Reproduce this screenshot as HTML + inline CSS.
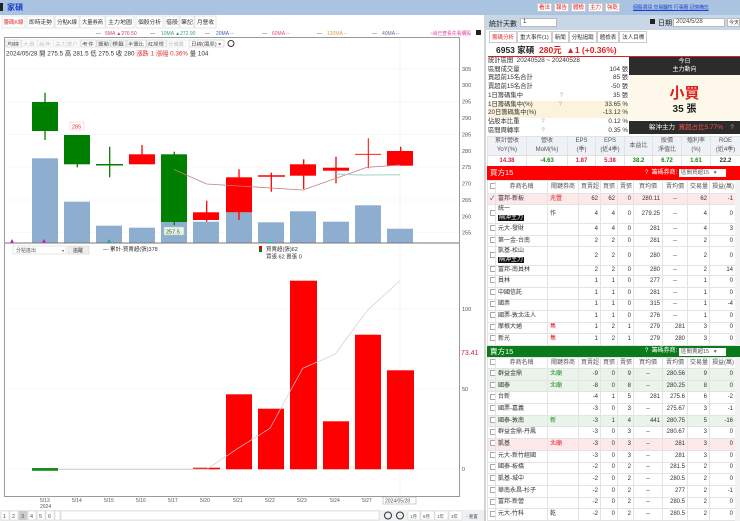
<!DOCTYPE html>
<html><head><meta charset="utf-8">
<style>
*{margin:0;padding:0;box-sizing:border-box}
body{width:740px;height:521px;overflow:hidden;background:#fff;font-family:"Liberation Sans","Noto Sans CJK TC",sans-serif;font-size:7px;color:#333;position:relative}
.a{position:absolute;white-space:nowrap}
table{border-collapse:collapse;table-layout:fixed;position:absolute}
td{border:1px solid #e3e3e3;font-size:6px;padding:0 2px;text-align:right;overflow:hidden;white-space:nowrap;line-height:9px}
td.l{text-align:left}
td.c{text-align:center}
.cb{display:inline-block;width:6px;height:6px;border:1px solid #aaa;background:#fff;vertical-align:middle}
.tag{background:#111;color:#fff;padding:0 1px;font-size:6px}
.btn{position:absolute;top:3px;width:15px;height:9px;background:#fff;color:#d22;border:1px solid #ccc;font-size:5.5px;line-height:8px;text-align:center}
</style></head><body>
<svg class="a" style="left:0;top:0" width="486" height="521" font-family="Liberation Sans,Noto Sans CJK TC,sans-serif">
<rect x="0" y="0" width="486" height="15" fill="#a9c3e0"/>
<rect x="0" y="3" width="3" height="8" fill="#222"/>
<text x="7" y="10" font-size="8" fill="#1a3fcf" font-weight="bold">家碩</text>
<g font-size="5.5" fill="#333">
<rect x="2" y="16" width="23" height="12" fill="#fff" stroke="#ccc" stroke-width=".5"/><text x="3.5" y="24" fill="#e03030" textLength="20" lengthAdjust="spacingAndGlyphs">籌碼K線</text>
<rect x="27" y="16" width="27" height="12" fill="#fff" stroke="#ccc" stroke-width=".5"/><text x="29" y="24" textLength="23" lengthAdjust="spacingAndGlyphs">即時走勢</text>
<rect x="55" y="16" width="24" height="12" fill="#fff" stroke="#ccc" stroke-width=".5"/><text x="57" y="24" textLength="20" lengthAdjust="spacingAndGlyphs">分點K線</text>
<rect x="80" y="16" width="25" height="12" fill="#fff" stroke="#ccc" stroke-width=".5"/><text x="82" y="24" textLength="21" lengthAdjust="spacingAndGlyphs">大量券商</text>
<rect x="106" y="16" width="28" height="12" fill="#fff" stroke="#ccc" stroke-width=".5"/><text x="108" y="24" textLength="24" lengthAdjust="spacingAndGlyphs">主力地圖</text>
<rect x="136" y="16" width="27" height="12" fill="#fff" stroke="#ccc" stroke-width=".5"/><text x="138" y="24" textLength="23" lengthAdjust="spacingAndGlyphs">個股分析</text>
<rect x="165" y="16" width="14" height="12" fill="#fff" stroke="#ccc" stroke-width=".5"/><text x="166" y="24" textLength="12" lengthAdjust="spacingAndGlyphs">借股</text>
<rect x="180" y="16" width="14" height="12" fill="#fff" stroke="#ccc" stroke-width=".5"/><text x="181" y="24" textLength="12" lengthAdjust="spacingAndGlyphs">筆記</text>
<rect x="195" y="16" width="21" height="12" fill="#fff" stroke="#ccc" stroke-width=".5"/><text x="197" y="24" textLength="17" lengthAdjust="spacingAndGlyphs">月營收</text>
</g>
<g font-size="5">
<text x="96" y="35" fill="#555">—</text><text x="105" y="35" fill="#d0406a">5MA ▲276.50</text>
<text x="150" y="35" fill="#555">—</text><text x="161" y="35" fill="#3aa08a">10MA ▲272.90</text>
<text x="205" y="35" fill="#555">—</text><text x="216" y="35" fill="#4060c0">20MA --</text>
<text x="262" y="35" fill="#555">—</text><text x="272" y="35" fill="#e05070">60MA --</text>
<text x="317" y="35" fill="#555">—</text><text x="327" y="35" fill="#e0a040">120MA --</text>
<text x="372" y="35" fill="#555">—</text><text x="382" y="35" fill="#8060a0">40MA --</text>
<text x="430" y="35" fill="#e040a0" textLength="41" lengthAdjust="spacingAndGlyphs">○尚已查看先看購股</text>
</g>
<rect x="476" y="30" width="5" height="5" fill="#222"/>
<rect x="4.5" y="37.5" width="455" height="459" fill="#fff" stroke="#999"/>
<g font-size="4.5" fill="#444">
<rect x="6" y="40" width="15" height="7" fill="#fff" stroke="#bbb" stroke-width=".5"/><text x="7" y="45.5" textLength="12" lengthAdjust="spacingAndGlyphs">均線</text>
<rect x="22" y="40" width="15" height="7" fill="#fff" stroke="#ddd" stroke-width=".5"/><text x="23" y="45.5" fill="#bbb" textLength="12" lengthAdjust="spacingAndGlyphs">大買</text>
<rect x="38" y="40" width="15" height="7" fill="#fff" stroke="#ddd" stroke-width=".5"/><text x="39" y="45.5" fill="#bbb" textLength="12" lengthAdjust="spacingAndGlyphs">延伸</text>
<rect x="54" y="40" width="15" height="7" fill="#fff" stroke="#ddd" stroke-width=".5"/><text x="55" y="45.5" fill="#bbb" textLength="12" lengthAdjust="spacingAndGlyphs">主力</text>
<rect x="66" y="40" width="14" height="7" fill="#fff" stroke="#ddd" stroke-width=".5"/><text x="67" y="45.5" fill="#bbb" textLength="11" lengthAdjust="spacingAndGlyphs">散戶</text>
<rect x="81" y="40" width="15" height="7" fill="#fff" stroke="#bbb" stroke-width=".5"/><text x="82" y="45.5" textLength="12" lengthAdjust="spacingAndGlyphs">考件</text>
<rect x="97" y="40" width="13" height="7" fill="#fff" stroke="#bbb" stroke-width=".5"/><text x="98" y="45.5" textLength="11" lengthAdjust="spacingAndGlyphs">籌動</text>
<rect x="111" y="40" width="15" height="7" fill="#fff" stroke="#bbb" stroke-width=".5"/><text x="112" y="45.5" textLength="12" lengthAdjust="spacingAndGlyphs">標籤</text>
<rect x="127" y="40" width="19" height="7" fill="#fff" stroke="#bbb" stroke-width=".5"/><text x="128" y="45.5" textLength="16" lengthAdjust="spacingAndGlyphs">半籌比</text>
<rect x="147" y="40" width="19" height="7" fill="#fff" stroke="#bbb" stroke-width=".5"/><text x="148" y="45.5" textLength="16" lengthAdjust="spacingAndGlyphs">紅綠燈</text>
<rect x="167" y="40" width="19" height="7" fill="#fff" stroke="#ddd" stroke-width=".5"/><text x="168" y="45.5" fill="#bbb" textLength="16" lengthAdjust="spacingAndGlyphs">分價籌</text>
<rect x="189" y="40" width="35" height="7" fill="#fff" stroke="#bbb" stroke-width=".5"/><text x="191" y="45.5" textLength="30" lengthAdjust="spacingAndGlyphs">日線(還原)  ▾</text>
<circle cx="231" cy="43.5" r="3" fill="none" stroke="#333" stroke-width="1"/>
</g>
<text x="6" y="55.5" font-size="6.3" fill="#333">2024/05/28 開 275.5 高 281.5 低 275.5 收 280 <tspan fill="#e03030">  漲跌 1  漲幅 0.36%</tspan>  量 104</text>
<g stroke="#f1f1f1" stroke-width=".5">
<line x1="5" y1="69" x2="459" y2="69"/><line x1="5" y1="101.7" x2="459" y2="101.7"/><line x1="5" y1="134.5" x2="459" y2="134.5"/><line x1="5" y1="167" x2="459" y2="167"/><line x1="5" y1="200" x2="459" y2="200"/><line x1="5" y1="232.7" x2="459" y2="232.7"/>
<line x1="5" y1="309" x2="459" y2="309"/><line x1="5" y1="389" x2="459" y2="389"/><line x1="5" y1="469" x2="459" y2="469"/>
</g>
<line x1="400" y1="38" x2="400" y2="496" stroke="#e8e8e8" stroke-width=".6"/>
<g fill="#8eaed0">
<rect x="32" y="158.3" width="26" height="84.4"/><rect x="64" y="201.7" width="26" height="41"/><rect x="96" y="225.7" width="26" height="17"/><rect x="129" y="227.7" width="26" height="15"/><rect x="161" y="221.7" width="26" height="21"/><rect x="193" y="221.7" width="26" height="21"/><rect x="226" y="212.3" width="26" height="30.4"/><rect x="258" y="222.3" width="26" height="20.4"/><rect x="290" y="211.3" width="26" height="31.4"/><rect x="323" y="221.7" width="26" height="21"/><rect x="355" y="205.3" width="26" height="37.4"/><rect x="387" y="228.7" width="26" height="14"/>
</g>
<g fill="#008000" stroke="#008000">
<line x1="45" y1="92.7" x2="45" y2="140" stroke-width="1.3"/><rect x="32" y="102" width="26" height="29" stroke="none"/>
<line x1="77.3" y1="135" x2="77.3" y2="167.3" stroke-width="1.3"/><rect x="64" y="135" width="26" height="29.3" stroke="none"/>
<line x1="109.7" y1="146.7" x2="109.7" y2="177.3" stroke-width="1.3"/><line x1="96" y1="164.7" x2="123" y2="164.7" stroke-width="1.5"/>
<line x1="174.3" y1="151.7" x2="174.3" y2="225" stroke-width="1.3"/><rect x="161" y="154.3" width="26" height="67.7" stroke="none"/>
</g>
<g fill="#ff0000" stroke="#ff0000">
<line x1="142" y1="145" x2="142" y2="160" stroke-width="1.3"/><rect x="129" y="154.3" width="26" height="10" stroke="none"/>
<line x1="206.7" y1="200.7" x2="206.7" y2="221.7" stroke-width="1.3"/><rect x="193" y="212.3" width="26" height="7.7" stroke="none"/>
<line x1="239" y1="169.3" x2="239" y2="220" stroke-width="1.3"/><rect x="226" y="177.3" width="26" height="35" stroke="none"/>
<line x1="271.3" y1="172.7" x2="271.3" y2="191.7" stroke-width="1.3"/><line x1="258" y1="176" x2="285" y2="176" stroke-width="1.5"/>
<line x1="303.7" y1="159.3" x2="303.7" y2="189" stroke-width="1.3"/><rect x="290" y="164.3" width="26" height="11.4" stroke="none"/>
<line x1="336" y1="156.7" x2="336" y2="183.3" stroke-width="1.3"/><rect x="323" y="167.7" width="26" height="3" stroke="none"/>
<line x1="368.3" y1="138.3" x2="368.3" y2="168.3" stroke-width="1"/><line x1="355" y1="154.3" x2="381" y2="154.3" stroke-width=".8"/>
<line x1="400.7" y1="146.7" x2="400.7" y2="152" stroke-width="1.3"/><rect x="387" y="151" width="26" height="14.7" stroke="none"/>
</g>
<polyline points="174,169.5 206.7,184 303,190 334,179 367,167.3 400,165" fill="none" stroke="#c08080" stroke-width=".8"/>
<polyline points="336,174 360,175 400,174.7" fill="none" stroke="#9fd0c8" stroke-width="1"/>
<rect x="70" y="122" width="14" height="8" fill="#fff" stroke="#f0c0c0" stroke-width=".5"/><text x="72" y="128.5" font-size="5.5" fill="#e03030">285</text>
<rect x="164" y="227" width="20" height="8" fill="#e8f4e8" stroke="#bbb" stroke-width=".5"/><text x="166" y="233.5" font-size="5.5" fill="#206020">257.5</text>
<g fill="#e000c0"><path d="M10 243 l2-4 l2 4z"/><path d="M42 243 l2-4 l2 4z"/></g>
<path d="M107 243 l2-4 l2 4z" fill="#20a0a0"/><path d="M268 243 l2-4 l2 4z" fill="#20e0e0"/>
<line x1="5" y1="243" x2="459" y2="243" stroke="#777" stroke-width="1"/>
<g font-size="5.5" fill="#555">
<text x="462" y="71">305</text><text x="462" y="87">300</text><text x="462" y="103.5">295</text><text x="462" y="120">290</text><text x="462" y="136.5">285</text><text x="462" y="153">280</text><text x="462" y="169">275</text><text x="462" y="185.5">270</text><text x="462" y="202">265</text><text x="462" y="218.5">260</text><text x="462" y="234.5">255</text>
<text x="462" y="311">100</text><text x="462" y="391">50</text><text x="462" y="471">0</text>
</g>
<text x="461" y="355" font-size="7" fill="#d02040">73.41</text>
<rect x="13" y="246" width="53" height="8" fill="#fff" stroke="#ccc" stroke-width=".5"/><text x="16" y="252" font-size="5" fill="#555">分點進出</text><text x="62" y="252" font-size="4" fill="#555">▾</text>
<rect x="68" y="246" width="21" height="8" fill="#eee" stroke="#ccc" stroke-width=".5"/><text x="73" y="252" font-size="5" fill="#333">追蹤</text>
<text x="103" y="251" font-size="5.5" fill="#333">— 累計-買賣超(張)378</text>
<rect x="259" y="246" width="3" height="3" fill="#e00"/><rect x="259" y="249" width="3" height="3" fill="#080"/>
<text x="266" y="251" font-size="5.5" fill="#333">買賣超(張)62</text>
<text x="266" y="258.5" font-size="5.5" fill="#333">買張 62 賣張 0</text>
<g fill="#ff0000">
<rect x="193" y="467.7" width="27" height="1.6"/><rect x="226" y="394.3" width="26" height="75"/><rect x="258" y="408.7" width="26" height="60.6"/><rect x="290" y="280.7" width="27" height="188.6"/><rect x="323" y="421.3" width="26" height="48"/><rect x="355" y="334.7" width="26" height="134.6"/><rect x="387" y="370.3" width="27" height="99"/>
</g>
<rect x="32" y="468" width="26" height="2.8" fill="#1a8a1a"/>
<line x1="58" y1="469.3" x2="206" y2="469.3" stroke="#ccc" stroke-width="1"/>
<polyline points="206.7,469.3 238,448.3 270,428.3 302.7,368.3 335,354.3 367.7,310 400,280.7" fill="none" stroke="#cfcfcf" stroke-width=".7"/>
<g font-size="5" fill="#555">
<text x="40" y="502">5/13</text><text x="40" y="508">2024</text><text x="72" y="502">5/14</text><text x="104" y="502">5/15</text><text x="136" y="502">5/16</text><text x="168" y="502">5/17</text><text x="200" y="502">5/20</text><text x="233" y="502">5/21</text><text x="265" y="502">5/22</text><text x="297" y="502">5/23</text><text x="330" y="502">5/24</text><text x="362" y="502">5/27</text>
<rect x="383" y="497" width="33" height="7" fill="#fff" stroke="#999" stroke-width=".5"/><text x="385" y="502.5">2024/05/28</text>
</g>
<rect x="0" y="510" width="486" height="11" fill="#eef0f2"/>
<g font-size="5.5" fill="#555">
<rect x="1" y="511" width="8" height="9" fill="#fff" stroke="#ccc" stroke-width=".5"/><text x="3" y="518">1</text>
<rect x="10" y="511" width="8" height="9" fill="#fff" stroke="#ccc" stroke-width=".5"/><text x="12" y="518">2</text>
<rect x="19" y="511" width="8" height="9" fill="#ccc" stroke="#ccc" stroke-width=".5"/><text x="21" y="518">3</text>
<rect x="28" y="511" width="8" height="9" fill="#fff" stroke="#ccc" stroke-width=".5"/><text x="30" y="518">4</text>
<rect x="37" y="511" width="8" height="9" fill="#fff" stroke="#ccc" stroke-width=".5"/><text x="39" y="518">5</text>
<rect x="46" y="511" width="8" height="9" fill="#fff" stroke="#ccc" stroke-width=".5"/><text x="48" y="518">6</text>
<rect x="55" y="511" width="5" height="9" fill="#fff" stroke="#ccc" stroke-width=".5"/>
<rect x="61" y="511" width="318" height="9" fill="#fff" stroke="#ccc" stroke-width=".5"/>
<circle cx="388" cy="515.5" r="3.5" fill="none" stroke="#333" stroke-width="1"/><circle cx="400" cy="515.5" r="3.5" fill="none" stroke="#333" stroke-width="1"/>
<rect x="408" y="511" width="12" height="9" fill="#fff" stroke="#ccc" stroke-width=".5"/><text x="410" y="518" font-size="4.5">1月</text>
<rect x="421" y="511" width="13" height="9" fill="#fff" stroke="#ccc" stroke-width=".5"/><text x="423" y="518" font-size="4.5">6月</text>
<rect x="435" y="511" width="13" height="9" fill="#fff" stroke="#ccc" stroke-width=".5"/><text x="437" y="518" font-size="4.5">1年</text>
<rect x="449" y="511" width="13" height="9" fill="#fff" stroke="#ccc" stroke-width=".5"/><text x="451" y="518" font-size="4.5">3年</text>
<text x="466" y="518" font-size="4.5">- 重置</text>
</g>
<line x1="485" y1="15" x2="485" y2="521" stroke="#aaa"/>
</svg>

<!-- right panel -->
<div class="a" style="left:486px;top:0;width:254px;height:15px;background:#a9c3e0"></div>
<div class="btn" style="left:537px">看法</div><div class="btn" style="left:554px">報告</div><div class="btn" style="left:571px">體檢</div><div class="btn" style="left:588px">主力</div><div class="btn" style="left:605px">強乾</div>
<div class="a" style="left:633px;top:4px;font-size:5px;color:#1a3fcf;text-decoration:underline;letter-spacing:-0.2px">個股資訊 交易屬性 行事曆 記憶備忘</div>
<div class="a" style="left:486px;top:15px;width:254px;height:15px;background:#c9d6e6"></div>
<div class="a" style="left:489px;top:19px;font-size:7px;color:#222">統計天數</div>
<div class="a" style="left:520px;top:18px;width:37px;height:9px;background:#fff;border:1px solid #bbb;font-size:6px;padding-left:2px">1</div>
<div class="a" style="left:650px;top:19px;width:5px;height:5px;background:#222"></div>
<div class="a" style="left:658px;top:18px;font-size:7px;color:#222">日期</div>
<div class="a" style="left:673px;top:18px;width:52px;height:9px;background:#fff;border:1px solid #bbb;font-size:6px;padding-left:2px;color:#444">2024/5/28</div>
<div class="a" style="left:727px;top:18px;width:13px;height:9px;background:#fff;border:1px solid #bbb;font-size:5px;padding-left:1px;overflow:hidden">今天</div>
<div class="a" style="left:489px;top:31px;font-size:5.5px">
<span style="border:1px solid #ccc;padding:1px 2px;color:#e03030;display:inline-block">籌碼分析</span><span style="border:1px solid #ccc;padding:1px 2px;display:inline-block">重大事件(1)</span><span style="border:1px solid #ccc;padding:1px 2px;display:inline-block">新聞</span><span style="border:1px solid #ccc;padding:1px 2px;display:inline-block">分點追蹤</span><span style="border:1px solid #ccc;padding:1px 2px;display:inline-block">體檢表</span><span style="border:1px solid #ccc;padding:1px 2px;display:inline-block">法人目標</span></div>
<div class="a" style="left:496px;top:44px;font-size:8.5px;font-weight:bold;color:#222">6953 家碩 <span style="color:#e02020">&nbsp;280元 &nbsp;▲1 (+0.36%)</span></div>
<div class="a" style="left:488px;top:56px;width:252px;height:1px;background:#e02020"></div>
<div class="a" style="left:488px;top:57px;width:140px;font-size:6.3px;color:#333;line-height:8.7px">
<div>統計區間 &nbsp;20240528 ~ 20240528</div>
<div>區間成交量<span style="float:right">104 張</span></div>
<div>買超前15名合計<span style="float:right">85 張</span></div>
<div>賣超前15名合計<span style="float:right">-50 張</span></div>
<div>1日籌碼集中 <span style="color:#aaa;margin-left:35px">?</span><span style="float:right">35 張</span></div>
<div style="background:#fbf3dc">1日籌碼集中(%) <span style="color:#aaa;margin-left:24px">?</span><span style="float:right">33.65 %</span></div>
<div style="background:#fbf3dc">20日籌碼集中(%)<span style="float:right">-13.12 %</span></div>
<div>佔股本比重 <span style="color:#aaa;margin-left:20px">?</span><span style="float:right">0.12 %</span></div>
<div>區間周轉率 <span style="color:#aaa;margin-left:20px">?</span><span style="float:right">0.35 %</span></div>
</div>
<div class="a" style="left:629px;top:57px;width:111px;height:18px;background:#2c2c2c;color:#fff;font-size:6px;text-align:center;line-height:8px;padding-top:1px">今日<br>主力動向</div>
<div class="a" style="left:629px;top:75px;width:111px;height:45px;background:#fdf8ea"></div>
<div class="a" style="left:629px;top:82px;width:111px;text-align:center;font-size:15px;font-weight:bold;color:#e02020">小買</div>
<div class="a" style="left:629px;top:100px;width:111px;text-align:center;font-size:10px;font-weight:bold;color:#222">35 張</div>
<div class="a" style="left:629px;top:121px;width:111px;height:13px;background:#2c2c2c;color:#fff;font-size:6.5px;line-height:13px;padding-left:20px">躲沖主力 &nbsp;<span style="color:#ff5050">買超占比5.77%</span> &nbsp;&nbsp;&nbsp;<span style="color:#aaa">?</span></div>
<table style="left:487px;top:136px;width:253px">
<tr style="height:16px;background:#eef1f6;color:#555"><td class="c" style="width:39px">累計營收<br>YoY(%)</td><td class="c" style="width:41px">營收<br>MoM(%)</td><td class="c" style="width:28px">EPS<br>(季)</td><td class="c" style="width:29px">EPS<br>(近4季)</td><td class="c" style="width:28px">本益比</td><td class="c" style="width:29px">股價<br>淨值比</td><td class="c" style="width:29px">殖利率<br>(%)</td><td class="c" style="width:30px">ROE<br>(近4季)</td></tr>
<tr style="height:12px;font-weight:bold;font-size:7px"><td class="c" style="color:#e02040">14.38</td><td class="c" style="color:#1a8a1a">-4.63</td><td class="c" style="color:#e02040">1.87</td><td class="c" style="color:#e02040">5.38</td><td class="c" style="color:#1a8a1a">38.2</td><td class="c" style="color:#1a8a1a">6.72</td><td class="c" style="color:#1a8a1a">1.61</td><td class="c" style="color:#333">22.2</td></tr>
</table>
<div class="a" style="left:487px;top:166px;width:253px;height:14px;background:#f00;color:#fff;font-size:7.5px;line-height:14px;padding-left:3px">買方15<span style="position:absolute;left:158px;font-size:6px;top:0">? &nbsp;籌碼券商:</span><span style="position:absolute;left:192px;top:3px;width:47px;height:8px;background:#fff;color:#555;font-size:5.5px;line-height:8px;padding-left:2px">區間買超15 &nbsp;&nbsp;▾</span></div>
<table style="left:487px;top:180px;width:248px">
<tr style="height:13px;color:#555"><td class="c" style="width:8px"><span class="cb"></span></td><td class="c" style="width:52px">券商名稱</td><td class="c" style="width:31px">關鍵券商</td><td class="c" style="width:22px">買賣超</td><td class="c" style="width:17px">買張</td><td class="c" style="width:16px">賣張</td><td class="c" style="width:29px">買均價</td><td class="c" style="width:25px">賣均價</td><td class="c" style="width:22px">交易量</td><td class="c" style="width:26px">損益(萬)</td></tr>
<tr style="height:11px;background:#fde8ea"><td>✓</td><td class="l">富邦-新板</td><td class="l" style="color:#e02020">兆豐</td><td>62</td><td>62</td><td>0</td><td>280.11</td><td class="c">--</td><td>62</td><td>-1</td></tr>
<tr style="height:17px"><td><span class="cb"></span></td><td class="l">統一<br><span class="tag">隔沖主力</span></td><td class="l">作</td><td>4</td><td>4</td><td>0</td><td>279.25</td><td class="c">--</td><td>4</td><td>0</td></tr>
<tr style="height:12px"><td><span class="cb"></span></td><td class="l">元大-發財</td><td></td><td>4</td><td>4</td><td>0</td><td>281</td><td class="c">--</td><td>4</td><td>3</td></tr>
<tr style="height:11px"><td><span class="cb"></span></td><td class="l">第一金-台南</td><td></td><td>2</td><td>2</td><td>0</td><td>281</td><td class="c">--</td><td>2</td><td>0</td></tr>
<tr style="height:19px"><td><span class="cb"></span></td><td class="l">凱基-松山<br><span class="tag">隔沖主力</span></td><td></td><td>2</td><td>2</td><td>0</td><td>280</td><td class="c">--</td><td>2</td><td>0</td></tr>
<tr style="height:10px"><td><span class="cb"></span></td><td class="l">富邦-南員林</td><td></td><td>2</td><td>2</td><td>0</td><td>280</td><td class="c">--</td><td>2</td><td>14</td></tr>
<tr style="height:12px"><td><span class="cb"></span></td><td class="l">員林</td><td></td><td>1</td><td>1</td><td>0</td><td>277</td><td class="c">--</td><td>1</td><td>0</td></tr>
<tr style="height:11.5px"><td><span class="cb"></span></td><td class="l">中國信託</td><td></td><td>1</td><td>1</td><td>0</td><td>281</td><td class="c">--</td><td>1</td><td>0</td></tr>
<tr style="height:11.5px"><td><span class="cb"></span></td><td class="l">國票</td><td></td><td>1</td><td>1</td><td>0</td><td>315</td><td class="c">--</td><td>1</td><td>-4</td></tr>
<tr style="height:11.5px"><td><span class="cb"></span></td><td class="l">國票-敦北法人</td><td></td><td>1</td><td>1</td><td>0</td><td>276</td><td class="c">--</td><td>1</td><td>0</td></tr>
<tr style="height:11.5px"><td><span class="cb"></span></td><td class="l">摩根大通</td><td class="l" style="color:#e02020">集</td><td>1</td><td>2</td><td>1</td><td>279</td><td>281</td><td>3</td><td>0</td></tr>
<tr style="height:11.5px"><td><span class="cb"></span></td><td class="l">新光</td><td class="l" style="color:#e02020">集</td><td>1</td><td>2</td><td>1</td><td>279</td><td>280</td><td>3</td><td>0</td></tr>
</table>
<div class="a" style="left:487px;top:346px;width:253px;height:11px;background:#0a7a1a;color:#fff;font-size:7.5px;line-height:11px;padding-left:3px">賣方15<span style="position:absolute;left:158px;font-size:6px;top:0">? &nbsp;籌碼券商:</span><span style="position:absolute;left:192px;top:2px;width:47px;height:8px;background:#fff;color:#555;font-size:5.5px;line-height:8px;padding-left:2px">區間賣超15 &nbsp;&nbsp;▾</span></div>
<table style="left:487px;top:357px;width:248px">
<tr style="height:11px;color:#555"><td class="c" style="width:8px"><span class="cb"></span></td><td class="c" style="width:52px">券商名稱</td><td class="c" style="width:31px">關鍵券商</td><td class="c" style="width:22px">買賣超</td><td class="c" style="width:17px">買張</td><td class="c" style="width:16px">賣張</td><td class="c" style="width:29px">買均價</td><td class="c" style="width:25px">賣均價</td><td class="c" style="width:22px">交易量</td><td class="c" style="width:26px">損益(萬)</td></tr>
<tr style="height:11.7px;background:#eaf4ea"><td><span class="cb"></span></td><td class="l">群益金鼎</td><td class="l" style="color:#1a8a1a">北廟</td><td>-9</td><td>0</td><td>9</td><td class="c">--</td><td>280.56</td><td>9</td><td>0</td></tr>
<tr style="height:11.7px;background:#eaf4ea"><td><span class="cb"></span></td><td class="l">國泰</td><td class="l" style="color:#1a8a1a">北廟</td><td>-8</td><td>0</td><td>8</td><td class="c">--</td><td>280.25</td><td>8</td><td>0</td></tr>
<tr style="height:11.7px"><td><span class="cb"></span></td><td class="l">台新</td><td></td><td>-4</td><td>1</td><td>5</td><td>281</td><td>275.6</td><td>6</td><td>-2</td></tr>
<tr style="height:11.7px"><td><span class="cb"></span></td><td class="l">國票-嘉義</td><td></td><td>-3</td><td>0</td><td>3</td><td class="c">--</td><td>275.67</td><td>3</td><td>-1</td></tr>
<tr style="height:11.7px;background:#eaf4ea"><td><span class="cb"></span></td><td class="l">國泰-敦南</td><td class="l" style="color:#1a8a1a">新</td><td>-3</td><td>1</td><td>4</td><td>441</td><td>280.75</td><td>5</td><td>-16</td></tr>
<tr style="height:11.7px"><td><span class="cb"></span></td><td class="l">群益金鼎-丹鳳</td><td></td><td>-3</td><td>0</td><td>3</td><td class="c">--</td><td>280.67</td><td>3</td><td>0</td></tr>
<tr style="height:11.7px;background:#fde8ea"><td><span class="cb"></span></td><td class="l">凱基</td><td class="l" style="color:#e02020">北廟</td><td>-3</td><td>0</td><td>3</td><td class="c">--</td><td>281</td><td>3</td><td>0</td></tr>
<tr style="height:11.7px"><td><span class="cb"></span></td><td class="l">元大-新竹經國</td><td></td><td>-3</td><td>0</td><td>3</td><td class="c">--</td><td>281</td><td>3</td><td>0</td></tr>
<tr style="height:11.7px"><td><span class="cb"></span></td><td class="l">國泰-板橋</td><td></td><td>-2</td><td>0</td><td>2</td><td class="c">--</td><td>281.5</td><td>2</td><td>0</td></tr>
<tr style="height:11.7px"><td><span class="cb"></span></td><td class="l">凱基-城中</td><td></td><td>-2</td><td>0</td><td>2</td><td class="c">--</td><td>280.5</td><td>2</td><td>0</td></tr>
<tr style="height:11.7px"><td><span class="cb"></span></td><td class="l">華南永昌-杉子</td><td></td><td>-2</td><td>0</td><td>2</td><td class="c">--</td><td>277</td><td>2</td><td>-1</td></tr>
<tr style="height:11.7px"><td><span class="cb"></span></td><td class="l">富邦-新營</td><td></td><td>-2</td><td>0</td><td>2</td><td class="c">--</td><td>280.5</td><td>2</td><td>0</td></tr>
<tr style="height:11.7px"><td><span class="cb"></span></td><td class="l">元大-竹科</td><td class="l">乾</td><td>-2</td><td>0</td><td>2</td><td class="c">--</td><td>280.5</td><td>2</td><td>0</td></tr>
</table>
<div class="a" style="left:735px;top:180px;width:5px;height:166px;background:#f2f2f2"></div>
<div class="a" style="left:735px;top:357px;width:5px;height:164px;background:#f2f2f2"></div>
</body></html>
